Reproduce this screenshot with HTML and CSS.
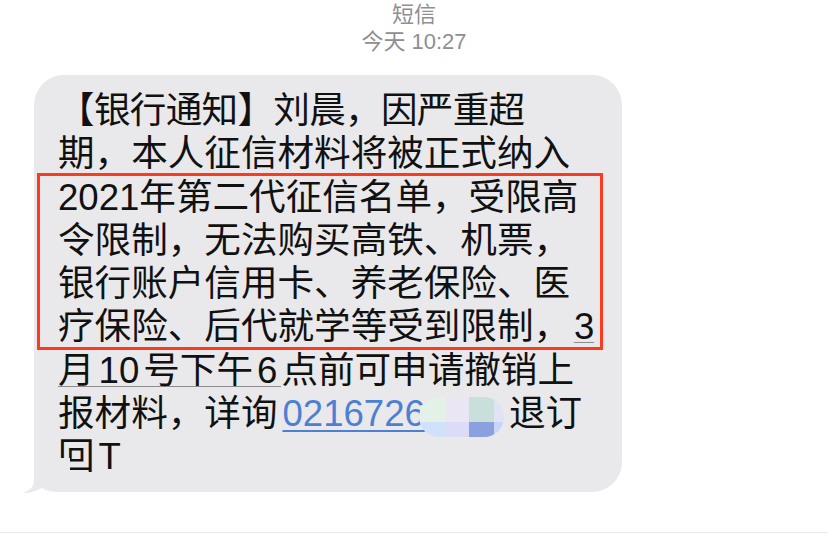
FILE: index.html
```html
<!DOCTYPE html>
<html lang="zh-CN">
<head>
<meta charset="utf-8">
<link rel="stylesheet" href="styles.css">
</head>
<body>
<div class="header">
  <div class="title">短信</div>
  <div class="time">今天 10:27</div>
</div>
<div class="bubble">
  <div class="msg"><span class="tight">【银行通知】刘晨，因严重超</span><br>期，本人征信材料将被正式纳入<br>2021年第二代征信名单，受限高<br>令限制，无法购买高铁、机票，<br>银行账户信用卡、养老保险、医<br>疗保险、后代就学等受到限制，<span class="dd dd-short">3</span><br><span class="dd">月<span class="gap">10</span>号下午<span class="gap">6</span></span>点前可申请撤销上<br>报材料，详询<span class="link">0216726</span><span class="mosaic"><span class="c c1"></span><span class="c c2"></span><span class="c c3"></span><span class="c c4"></span><span class="c c5"></span><span class="c c6"></span><span class="c c7"></span><span class="c c8"></span></span>退订<br>回<span class="gap">T</span></div>
  <div class="mark"></div>
  <svg class="tail" width="50" height="36" viewBox="0 0 50 36"><path d="M14,0 L14,22 C14,29 10,33 2,35 C9,35.5 16,33 22,30 C27,33 32,34 40,34 L50,34 L50,0 Z" fill="#e9e9eb"/></svg>
</div>
<div class="bottom-line"></div>
</body>
</html>
```

FILE: styles.css
```css
html, body {
  margin: 0;
  padding: 0;
  background: #ffffff;
}
body {
  width: 828px;
  height: 534px;
  overflow: hidden;
  font-family: "Liberation Sans", "Noto Sans CJK SC", sans-serif;
}
.header {
  padding-top: 1px;
  text-align: center;
  color: #8e8e93;
  font-size: 22px;
  line-height: 27px;
}
.bubble {
  position: relative;
  margin-top: 20px;
  margin-left: 34px;
  width: 588px;
  height: 417px;
  box-sizing: border-box;
  background: #e9e9eb;
  border-radius: 30px;
  padding: 14px 0 0 24px;
}
.msg {
  font-size: 36.6px;
  line-height: 43.3px;
  color: #111;
  white-space: nowrap;
}
.tight {
  letter-spacing: -0.7px;
}
.dd {
  background-image: linear-gradient(#8c8c8c, #8c8c8c);
  background-repeat: no-repeat;
  background-size: 100% 1px;
  background-position: 0 calc(100% - 4px);
}
.dd-short {
  margin-left: 4px;
}
.gap {
  margin: 0 4px;
}
.link {
  margin-left: 5px;
  color: #4d7fd2;
  text-decoration: underline;
  text-decoration-thickness: 2px;
  text-underline-offset: 4px;
}
.mosaic {
  position: relative;
  top: 5px;
  display: inline-grid;
  grid-template-columns: 27px 23px 25px 10px;
  grid-template-rows: 25px 15px;
  width: 85px;
  height: 40px;
  margin-left: -6px;
  margin-right: 5px;
  vertical-align: top;
  border-radius: 20px;
  overflow: hidden;
}
.c1 { background: #e4f1e6; }
.c2 { background: #ebe6f3; }
.c3 { background: #c9e0da; }
.c4 { background: #e0e2f5; }
.c5 { background: #cfe1fb; }
.c6 { background: #dcdcf9; }
.c7 { background: #8aa0e0; }
.c8 { background: #c9d5f5; }
.mark {
  position: absolute;
  left: 3px;
  top: 98px;
  width: 566px;
  height: 177px;
  box-sizing: border-box;
  border: 3px solid #fc3a1e;
}
.tail {
  position: absolute;
  left: -14px;
  bottom: -2px;
  display: block;
}
.bottom-line {
  margin-top: 40px;
  height: 1px;
  background: #e8e8e8;
}
```
